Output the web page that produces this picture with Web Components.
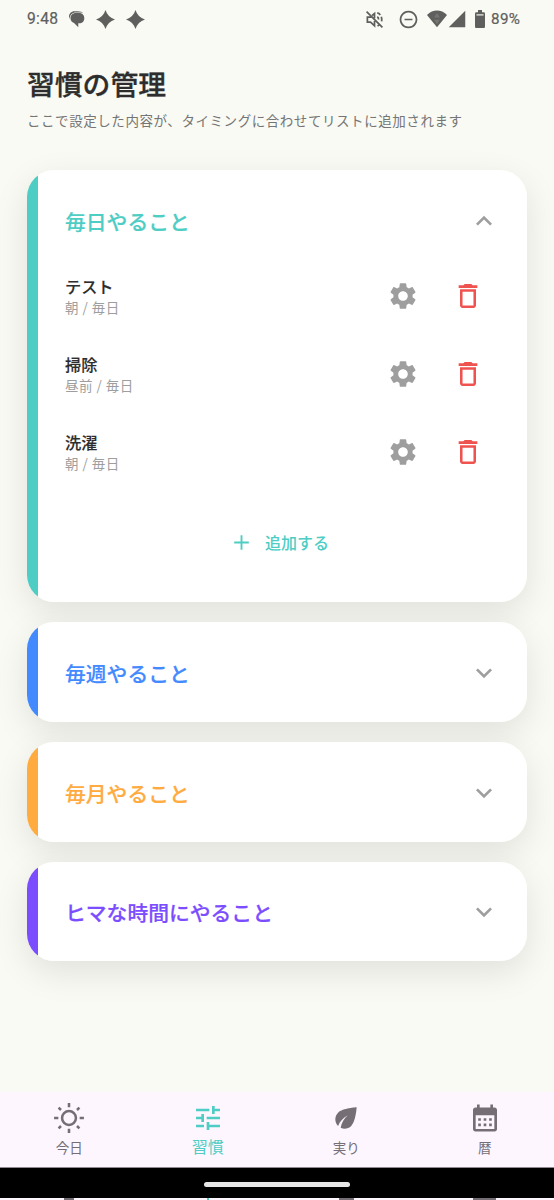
<!DOCTYPE html>
<html lang="ja">
<head>
<meta charset="utf-8">
<meta name="viewport" content="width=device-width, initial-scale=1">
<title>習慣の管理</title>
<style>
	body {
		margin: 0;
		background: #f9faf4;
	}
</style>
</head>
<body>
<habit-app></habit-app>

<script>
// Icon paths on a 24x24 grid
const ICONS = {
	up: '<path d="M12 8l-6 6 1.41 1.41L12 10.83l4.59 4.58L18 14z"/>',
	down: '<path d="M16.59 8.59L12 13.17 7.41 8.59 6 10l6 6 6-6z"/>',
	add: '<path d="M19 12.9h-6.1V19h-1.8v-6.1H5v-1.8h6.1V5h1.8v6.1H19z"/>',
	settings: '<path d="M19.14 12.94c.04-.3.06-.61.06-.94 0-.32-.02-.64-.07-.94l2.03-1.58c.18-.14.23-.41.12-.61l-1.92-3.32c-.12-.22-.37-.29-.59-.22l-2.39.96c-.5-.38-1.03-.7-1.62-.94l-.36-2.54c-.04-.24-.24-.41-.48-.41h-3.84c-.24 0-.43.17-.47.41l-.36 2.54c-.59.24-1.13.57-1.62.94l-2.39-.96c-.22-.08-.47 0-.59.22L2.74 8.87c-.12.21-.08.47.12.61l2.03 1.58c-.05.3-.09.63-.09.94s.02.64.07.94l-2.03 1.58c-.18.14-.23.41-.12.61l1.92 3.32c.12.22.37.29.59.22l2.39-.96c.5.38 1.03.7 1.62.94l.36 2.54c.05.24.24.41.48.41h3.84c.24 0 .44-.17.47-.41l.36-2.54c.59-.24 1.13-.56 1.62-.94l2.39.96c.22.08.47 0 .59-.22l1.92-3.32c.12-.22.07-.47-.12-.61l-2.01-1.58zM12 15.6c-1.98 0-3.6-1.62-3.6-3.6s1.62-3.6 3.6-3.6 3.6 1.62 3.6 3.6-1.62 3.6-3.6 3.6z"/>',
	trash: '<path d="M6 19c0 1.1.9 2 2 2h8c1.1 0 2-.9 2-2V7H6v12zM7.9 8.9h8.2v10.2H7.9V8.9zM15.5 4l-1-1h-5l-1 1H5v2h14V4z"/>',
	sun: '<g fill="none" stroke="currentColor" stroke-width="1.9"><circle cx="12" cy="12" r="5.2"/><path d="M12 .8V4M12 20v3.2M.8 12H4M20 12h3.2M4.2 4.2L6 6M18 18l1.8 1.8M4.2 19.8L6 18M18 6l1.8-1.8"/></g>',
	tune: '<path d="M3 17v2h6v-2H3zM3 5v2h10V5H3zm10 16v-2h8v-2h-8v-2h-2v6h2zM7 9v2H3v2h4v2h2V9H7zm14 4v-2H11v2h10zm-6-4h2V7h4V5h-4V3h-2v6z"/>',
	leaf: '<path d="M6.05 8.05c-2.73 2.73-2.73 7.15-.02 9.88 1.47-3.4 4.09-6.24 7.36-7.93-2.77 2.34-4.71 5.61-5.39 9.32 2.6 1.23 5.8.78 7.95-1.37C19.43 14.47 20 4 20 4S9.53 4.57 6.05 8.05z"/>',
	calendar: '<path d="M19.2 4.1H18V1.9h-2v2.2H8V1.9H6v2.2H4.8C3.8 4.1 3 4.9 3 5.9v14.4c0 1 .8 1.8 1.8 1.8h14.4c1 0 1.8-.8 1.8-1.8V5.9c0-1-.8-1.8-1.8-1.8zM19 20.3H5V9.9h14z"/><path d="M6.9 12.1h2v2h-2zm4.1 0h2v2h-2zm4.1 0h2v2h-2zM6.9 16.1h2v2h-2zm4.1 0h2v2h-2zm4.1 0h2v2h-2z"/>',
	chat: '<path d="M2.3 12C-.5 7 3.500 1.500 9 1.500h5c3.500 0 6 1 7.200 2.500-1.700-.5-3.500-.7-5.700-.7H11C6 3.300 2.300 6.500 2.300 12z"/><path d="M11 4h5c4.200 0 7 2.800 7 7 0 4-2.800 6.800-7 6.800h-1.500V23L8.500 17.300C5.500 16.500 3.500 14.300 3.500 11c0-4.200 3.300-7 7.500-7z"/>',
	sparkle: '<path d="M12 0c1.8 6 6 10.2 12 12-6 1.8-10.2 6-12 12-1.8-6-6-10.2-12-12C6 10.2 10.2 6 12 0z"/>',
	muted: '<g fill="none" stroke="currentColor" stroke-width="2.2"><path d="M2 2l20 20M9 7l3-2.5v6M12 14v6l-5-4.7H3V9h5"/><path d="M15.5 8.5q1.5 1 1.7 3.5M16 16l-.5.5M15.5 3.7q2.4.6 3.8 2.5M20.6 8.5q.9 2.5.4 6M18.3 18.5l-2.5 1.6"/></g>',
	dnd: '<path fill="none" stroke="currentColor" stroke-width="2.2" d="M12 2a10 10 0 1 0 .01 0zM7 12h10"/>',
	wifi: '<path d="M0 6.5C7-1.3 17-1.3 24 6.5L12 23z"/><path fill="#757672" d="M12 4l3.5 6h-7zM8.500 13h7L12 19z"/>',
	signal: '<path d="M23 1v22H1z"/>',
	battery: '<path d="M8 0h8v3h4q2 0 2 2v17q0 2-2 2H4q-2 0-2-2V5q0-2 2-2h4z"/><path fill="#d6d7d2" d="M5 5.5h14v2H5z"/>'
};

class AppIcon extends HTMLElement {
	constructor() {
		super();
		this.attachShadow({ mode: 'open' });
	}

	connectedCallback() {
		const width = this.getAttribute('width') || this.getAttribute('size');
		const height = this.getAttribute('size');
		this.shadowRoot.innerHTML = `
			<style>
				:host {
					display: block;
					flex: none;
				}

				svg {
					display: block;
					fill: currentColor;
				}
			</style>
			<svg width="${width}" height="${height}" viewBox="0 0 24 24" preserveAspectRatio="none" aria-hidden="true">${ICONS[this.getAttribute('name')]}</svg>
		`;
	}
}

class StatusBar extends HTMLElement {
	constructor() {
		super();
		this.attachShadow({ mode: 'open' });
		this.shadowRoot.innerHTML = `
			<style>
				:host {
					display: flex;
					align-items: center;
					justify-content: space-between;
					height: 38px;
					padding: 0 32px 0 27px;
					box-sizing: border-box;
					color: #5f605d;
					font: 400 15.6px/38px Roboto, sans-serif;
					-webkit-text-stroke: 0.2px;
				}

				div {
					display: flex;
					align-items: center;
				}

				.time {
					width: 41px;
					letter-spacing: 0.3px;
				}

				.percent {
					width: 31px;
					margin-left: 5px;
					font-size: 15.2px;
					letter-spacing: 0.4px;
					white-space: nowrap;
				}
			</style>
			<div>
				<span class="time">9:48</span>
				<app-icon name="chat" width="17" size="18"></app-icon>
				<app-icon name="sparkle" size="19" style="margin-left: 11px"></app-icon>
				<app-icon name="sparkle" size="19" style="margin-left: 11px"></app-icon>
			</div>
			<div>
				<app-icon name="muted" size="19"></app-icon>
				<app-icon name="dnd" size="19" style="margin-left: 15px"></app-icon>
				<app-icon name="wifi" width="20" size="18" style="margin-left: 9px"></app-icon>
				<app-icon name="signal" size="18" style="margin-left: 1px"></app-icon>
				<app-icon name="battery" width="12" size="18" style="margin-left: 8px"></app-icon>
				<span class="percent">89%</span>
			</div>
		`;
	}
}

class HabitItem extends HTMLElement {
	constructor() {
		super();
		this.attachShadow({ mode: 'open' });
		this.shadowRoot.innerHTML = `
			<style>
				:host {
					display: flex;
					align-items: center;
					height: 78px;
					padding-right: 16px;
				}

				.text {
					flex: 1;
				}

				.name {
					color: #2d2d2d;
					font-size: 16.2px;
					font-weight: 500;
					line-height: 22px;
					-webkit-text-stroke: 0.15px;
				}

				.timing {
					color: #9e9e9e;
					font-size: 13.5px;
					letter-spacing: 0.5px;
					line-height: 20px;
				}

				.settings {
					color: #9e9e9e;
					margin-right: 33px;
				}

				.trash {
					color: #ef5350;
				}
			</style>
			<div class="text">
				<div class="name"><slot></slot></div>
				<div class="timing"><slot name="timing"></slot></div>
			</div>
			<app-icon class="settings" name="settings" size="32"></app-icon>
			<app-icon class="trash" name="trash" size="32"></app-icon>
		`;
	}
}

class HabitSection extends HTMLElement {
	constructor() {
		super();
		this.attachShadow({ mode: 'open' });
	}

	connectedCallback() {
		const open = this.hasAttribute('open');
		this.shadowRoot.innerHTML = `
			<style>
				:host {
					display: block;
					border-radius: 27px;
					box-shadow: 0 11px 34px rgba(0, 0, 0, 0.1);
				}

				.card {
					height: 99.4px;
					overflow: hidden;
					box-sizing: border-box;
					border-radius: 27px;
					padding: 0 27px;
					background: linear-gradient(to right, var(--accent) 11px, #fff 11px);
				}

				:host([open]) .card {
					height: 432px;
				}

				header {
					display: flex;
					align-items: center;
					justify-content: space-between;
					height: 101px;
					padding-left: 11px;
					color: var(--accent);
				}

				h2 {
					margin: 0;
					font-size: 20.8px;
					font-weight: 500;
					line-height: 30px;
					-webkit-text-stroke: 0.2px;
				}

				header app-icon {
					color: #9e9e9e;
				}

				.body {
					margin-top: -14px;
					padding-left: 11px;
				}

				.add {
					display: flex;
					align-items: center;
					justify-content: center;
					gap: 11px;
					height: 78px;
					margin-top: 12px;
					padding-right: 7px;
					color: var(--accent);
					font-size: 16px;
					font-weight: 500;
				}
			</style>
			<div class="card">
				<header>
					<h2>${this.getAttribute('heading')}</h2>
					<app-icon name="${open ? 'up' : 'down'}" size="32"></app-icon>
				</header>
				${open ? `
				<div class="body">
					<slot></slot>
					<div class="add"><app-icon name="add" size="25"></app-icon><span>追加する</span></div>
				</div>` : ''}
			</div>
		`;
	}
}

class NavItem extends HTMLElement {
	constructor() {
		super();
		this.attachShadow({ mode: 'open' });
	}

	connectedCallback() {
		this.shadowRoot.innerHTML = `
			<style>
				:host {
					display: flex;
					flex-direction: column;
					align-items: center;
					flex: 1;
					padding-top: 10px;
					color: #756f75;
					font-size: 13.5px;
					line-height: 26px;
				}

				:host([active]) {
					color: #4ecdc4;
					font-size: 16px;
					line-height: 24px;
				}
			</style>
			<app-icon name="${this.getAttribute('icon')}" size="32"></app-icon>
			<span><slot></slot></span>
		`;
	}
}

class NavBar extends HTMLElement {
	constructor() {
		super();
		this.attachShadow({ mode: 'open' });
		this.shadowRoot.innerHTML = `
			<style>
				:host {
					display: block;
				}

				nav {
					display: flex;
					height: 75px;
					background: #fdf6ff;
				}

				.gesture {
					display: flex;
					align-items: center;
					justify-content: center;
					height: 31px;
					padding-top: 2px;
					box-sizing: border-box;
					background: #000;
					border-top: 1px solid #8f8b90;
				}

				.handle {
					width: 146px;
					height: 5px;
					border-radius: 3px;
					background: #e6e6e6;
				}

				/* top slice of the row below the gesture area */
				.edge {
					display: flex;
					height: 2px;
					overflow: hidden;
					background: #fdf6ff;
				}

				.edge i {
					flex: 1;
					height: 2px;
					background: linear-gradient(currentColor, currentColor) center / var(--w) 2px no-repeat;
				}
			</style>
			<nav>
				<nav-item icon="sun">今日</nav-item>
				<nav-item icon="tune" active>習慣</nav-item>
				<nav-item icon="leaf">実り</nav-item>
				<nav-item icon="calendar">暦</nav-item>
			</nav>
			<div class="gesture"><div class="handle"></div></div>
			<div class="edge">
				<i style="--w: 10px; color: #756f75"></i>
				<i style="--w: 2px; color: #4ecdc4"></i>
				<i style="--w: 15px; color: #756f75"></i>
				<i style="--w: 23px; color: #756f75"></i>
			</div>
		`;
	}
}

class HabitApp extends HTMLElement {
	constructor() {
		super();
		this.attachShadow({ mode: 'open' });
		this.shadowRoot.innerHTML = `
			<style>
				:host {
					display: flex;
					flex-direction: column;
					width: 554px;
					height: 1200px;
					overflow: hidden;
					background: #f9faf4;
					font-family: "Noto Sans CJK JP", sans-serif;
				}

				.heading {
					height: 132px;
					padding: 25px 27px 0;
					box-sizing: border-box;
				}

				h1 {
					margin: 0;
					color: #2d2d2d;
					font-size: 27.8px;
					font-weight: 500;
					line-height: 40px;
					-webkit-text-stroke: 0.3px;
				}

				p {
					margin: 6px 0 0;
					color: #757575;
					font-size: 13.5px;
					letter-spacing: 0.56px;
					line-height: 22px;
					white-space: nowrap;
				}

				main {
					display: flex;
					flex: 1;
					flex-direction: column;
					gap: 20.4px;
					padding: 0 27px;
				}
			</style>
			<status-bar></status-bar>
			<div class="heading">
				<h1>習慣の管理</h1>
				<p>ここで設定した内容が、タイミングに合わせてリストに追加されます</p>
			</div>
			<main>
				<habit-section heading="毎日やること" open style="--accent: #4ecdc4">
					<habit-item>テスト<span slot="timing">朝 / 毎日</span></habit-item>
					<habit-item>掃除<span slot="timing">昼前 / 毎日</span></habit-item>
					<habit-item>洗濯<span slot="timing">朝 / 毎日</span></habit-item>
				</habit-section>
				<habit-section heading="毎週やること" style="--accent: #448aff"></habit-section>
				<habit-section heading="毎月やること" style="--accent: #ffab40"></habit-section>
				<habit-section heading="ヒマな時間にやること" style="--accent: #7c4dff"></habit-section>
			</main>
			<nav-bar></nav-bar>
		`;
	}
}

customElements.define('app-icon', AppIcon);
customElements.define('status-bar', StatusBar);
customElements.define('habit-item', HabitItem);
customElements.define('habit-section', HabitSection);
customElements.define('nav-item', NavItem);
customElements.define('nav-bar', NavBar);
customElements.define('habit-app', HabitApp);
</script>
</body>
</html>
